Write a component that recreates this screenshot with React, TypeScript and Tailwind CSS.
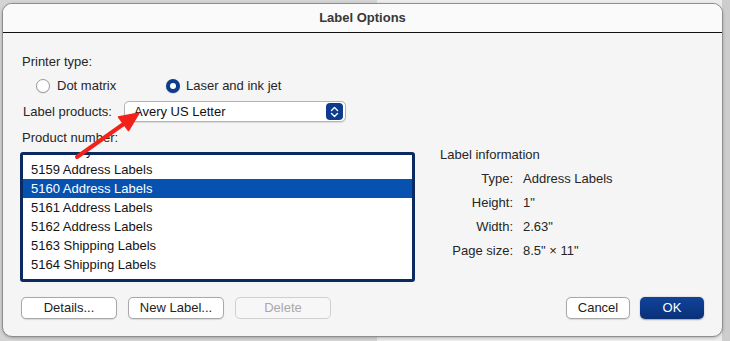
import React from 'react';

const rows = [
  '5158 Easy Peel Address Labels',
  '5159 Address Labels',
  '5160 Address Labels',
  '5161 Address Labels',
  '5162 Address Labels',
  '5163 Shipping Labels',
  '5164 Shipping Labels',
];

const info = [
  { label: 'Type:', value: 'Address Labels' },
  { label: 'Height:', value: '1"' },
  { label: 'Width:', value: '2.63"' },
  { label: 'Page size:', value: '8.5" × 11"' },
];

function Radio({ checked }: { checked?: boolean }) {
  return checked ? (
    <span className="w-[14px] h-[14px] rounded-full bg-[#0d3b8e] flex items-center justify-center shadow-[0_0.5px_1px_rgba(0,0,0,0.3)]">
      <span className="w-[6px] h-[6px] rounded-full bg-white" />
    </span>
  ) : (
    <span className="w-[14px] h-[14px] rounded-full bg-white border border-[#9c9c9c] shadow-[0_0.5px_1px_rgba(0,0,0,0.15)]" />
  );
}

function Button({
  children,
  width,
  disabled,
  primary,
}: {
  children: React.ReactNode;
  width: string;
  disabled?: boolean;
  primary?: boolean;
}) {
  let cls =
    'h-[22px] rounded-[5px] flex items-center justify-center text-[13px] ' + width + ' ';
  if (primary) {
    cls += 'bg-gradient-to-b from-[#10439c] to-[#0a3176] text-white shadow-[0_0.5px_1.5px_rgba(0,0,0,0.35)]';
  } else if (disabled) {
    cls += 'border border-[#cfcfcf] bg-[#f7f7f7] text-[#a9a9a9]';
  } else {
    cls += 'border border-[#a8a8a8] bg-white text-[#222] shadow-[0_0.5px_1px_rgba(0,0,0,0.12)]';
  }
  return <div className={cls}>{children}</div>;
}

export default function App() {
  return (
    <div
      className="relative w-[730px] h-[341px] overflow-hidden pt-[3px] pl-[2px] bg-[linear-gradient(to_right,#d4d4d4_377px,#ececec_377px,#ececec_722px,#cdcdcd_722px)] text-[13px] text-[#262626]"
      style={{ fontFamily: '"Liberation Sans", Arial, sans-serif' }}>

      {/* Dialog window */}
      <div className="w-[721px] h-[334px] rounded-[10px] border border-[#8e8e8e] bg-[#f5f5f5] overflow-hidden flex flex-col shadow-[0_1px_3px_rgba(0,0,0,0.25)]">
        {/* Title bar */}
        <div className="h-[29px] shrink-0 bg-[#fafafa] border-b border-[#111] flex items-center justify-center font-bold text-[#383838]">
          Label Options
        </div>

        {/* Body */}
        <div className="flex-1 flex flex-col px-[18px] pt-[21px]">
          <div className="h-[16px] flex items-center pl-px">Printer type:</div>

          <div className="h-[16px] mt-[8px] flex items-center pl-[15px]">
            <div className="w-[130px] flex items-center gap-[7px]">
              <Radio />
              <span>Dot matrix</span>
            </div>
            <div className="flex items-center gap-[6px]">
              <Radio checked />
              <span>Laser and ink jet</span>
            </div>
          </div>

          <div className="h-[21px] mt-[7px] flex items-center pl-[2px]">
            <span className="w-[101px]">Label products:</span>
            <div className="w-[222px] h-[21px] rounded-[5px] border border-[#b4b4b4] bg-white flex items-center justify-between pl-[9px] pr-[2px] shadow-[0_0.5px_1px_rgba(0,0,0,0.1)]">
              <span className="text-[#111]">Avery US Letter</span>
              <span className="w-[17px] h-[17px] rounded-[4px] bg-[#0d3b8e] flex items-center justify-center">
                <svg width="9" height="12" viewBox="0 0 9 12" fill="none">
                  <path d="M1.5 4.5 L4.5 1.5 L7.5 4.5" stroke="white" strokeWidth="1.4" strokeLinecap="round" strokeLinejoin="round" />
                  <path d="M1.5 7.5 L4.5 10.5 L7.5 7.5" stroke="white" strokeWidth="1.4" strokeLinecap="round" strokeLinejoin="round" />
                </svg>
              </span>
            </div>
          </div>

          <div className="flex mt-[8px]">
            {/* Left: product list */}
            <div className="flex flex-col -ml-px">
              <div className="h-[16px] flex items-center pl-[2px]">Product number:</div>
              <div className="mt-[6px] w-[395px] h-[130px] rounded-[3px] border-[3px] border-[#0b2a62] bg-white overflow-hidden">
                <div className="-mt-[14px]">
                  {rows.map((r) => {
                    const sel = r.startsWith('5160');
                    return (
                      <div
                        key={r}
                        className={`h-[19px] flex items-center pl-[8px] ${sel ? 'bg-[#0752b0] text-white' : 'text-[#141414]'}`}>
                        {r}
                      </div>);
                  })}
                </div>
              </div>
            </div>

            {/* Right: label information */}
            <div className="ml-[25px] pt-[13px] flex flex-col">
              <div className="h-[24px] flex items-center">Label information</div>
              {info.map((i) => (
                <div key={i.label} className="h-[24px] flex items-center">
                  <span className="w-[73px] text-right">{i.label}</span>
                  <span className="ml-[10px]">{i.value}</span>
                </div>
              ))}
            </div>
          </div>

          {/* Buttons */}
          <div className="mt-[15px] flex items-center">
            <div className="flex gap-[11px]">
              <Button width="w-[96px]">Details...</Button>
              <Button width="w-[96px]">New Label...</Button>
              <Button width="w-[96px]" disabled>Delete</Button>
            </div>
            <div className="ml-auto flex gap-[10px]">
              <Button width="w-[64px]">Cancel</Button>
              <Button width="w-[64px]" primary>OK</Button>
            </div>
          </div>
        </div>
      </div>

      {/* Red annotation arrow */}
      <svg className="absolute left-0 top-0 pointer-events-none" width="730" height="341">
        <line x1="77" y1="157" x2="125" y2="123" stroke="#f2221b" strokeWidth="4" strokeLinecap="round" />
        <polygon points="139,113 118.5,117 128.5,130.5" fill="#f2221b" stroke="#f2221b" strokeWidth="1.5" strokeLinejoin="round" />
      </svg>
    </div>);
}
